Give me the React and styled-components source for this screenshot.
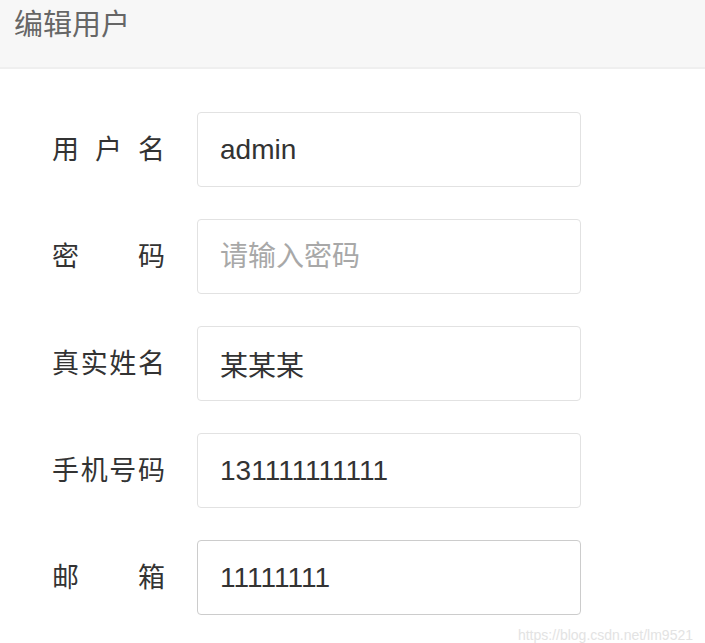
import React from "react"
import styled, { createGlobalStyle } from "styled-components"

const GlobalStyle = createGlobalStyle`
  html, body {
    margin: 0;
    padding: 0;
    background: #ffffff;
  }
  body {
    font-family: "Liberation Sans", "Noto Sans CJK SC", sans-serif;
  }
`

const Page = styled.div`
  width: 705px;
  height: 643px;
  overflow: hidden;
  background: #ffffff;
`

const Header = styled.div`
  height: 69px;
  padding: 6px 14px 0;
  box-sizing: border-box;
  background: #f7f7f7;
  border-bottom: 2px solid #efefef;
`

const Title = styled.h1`
  margin: 0;
  font-size: 29px;
  line-height: 38px;
  font-weight: normal;
  color: #666666;
`

const Form = styled.form`
  display: flex;
  flex-direction: column;
  gap: 32px;
  padding: 43px 0 0 52px;
`

const Row = styled.div`
  display: flex;
  align-items: center;
  gap: 32px;
`

const Label = styled.label`
  width: 113px;
  display: flex;
  justify-content: space-between;
  font-size: 27px;
  line-height: 36px;
  color: #333333;
`

const Field = styled.input`
  width: 384px;
  height: 75px;
  box-sizing: border-box;
  padding: 0 0 0 22px;
  border: 1px solid ${(p) => (p.$active ? "#cccccc" : "#e2e2e2")};
  border-radius: 4px;
  font-family: "Liberation Sans", "Noto Sans CJK SC", sans-serif;
  font-size: 28px;
  color: #333333;
  background: #ffffff;
  outline: none;

  &::placeholder {
    color: #a8a8a8;
  }
`

const Watermark = styled.div`
  margin-top: 12px;
  padding-right: 12px;
  text-align: right;
  font-size: 14px;
  line-height: 16px;
  color: #e3e3e3;
`

const fields = [
  { label: "用户名", value: "admin" },
  { label: "密码", placeholder: "请输入密码" },
  { label: "真实姓名", value: "某某某" },
  { label: "手机号码", value: "131111111111" },
  { label: "邮箱", value: "11111111", active: true },
]

const App = () => {
  return (
    <>
      <GlobalStyle />
      <Page>
        <Header>
          <Title>编辑用户</Title>
        </Header>
        <Form>
          {fields.map((f) => (
            <Row key={f.label}>
              <Label>
                {f.label.split("").map((ch, i) => (
                  <span key={i}>{ch}</span>
                ))}
              </Label>
              <Field
                readOnly
                defaultValue={f.value}
                placeholder={f.placeholder}
                $active={f.active}
              />
            </Row>
          ))}
        </Form>
        <Watermark>https://blog.csdn.net/lm9521</Watermark>
      </Page>
    </>
  )
}

export default App
